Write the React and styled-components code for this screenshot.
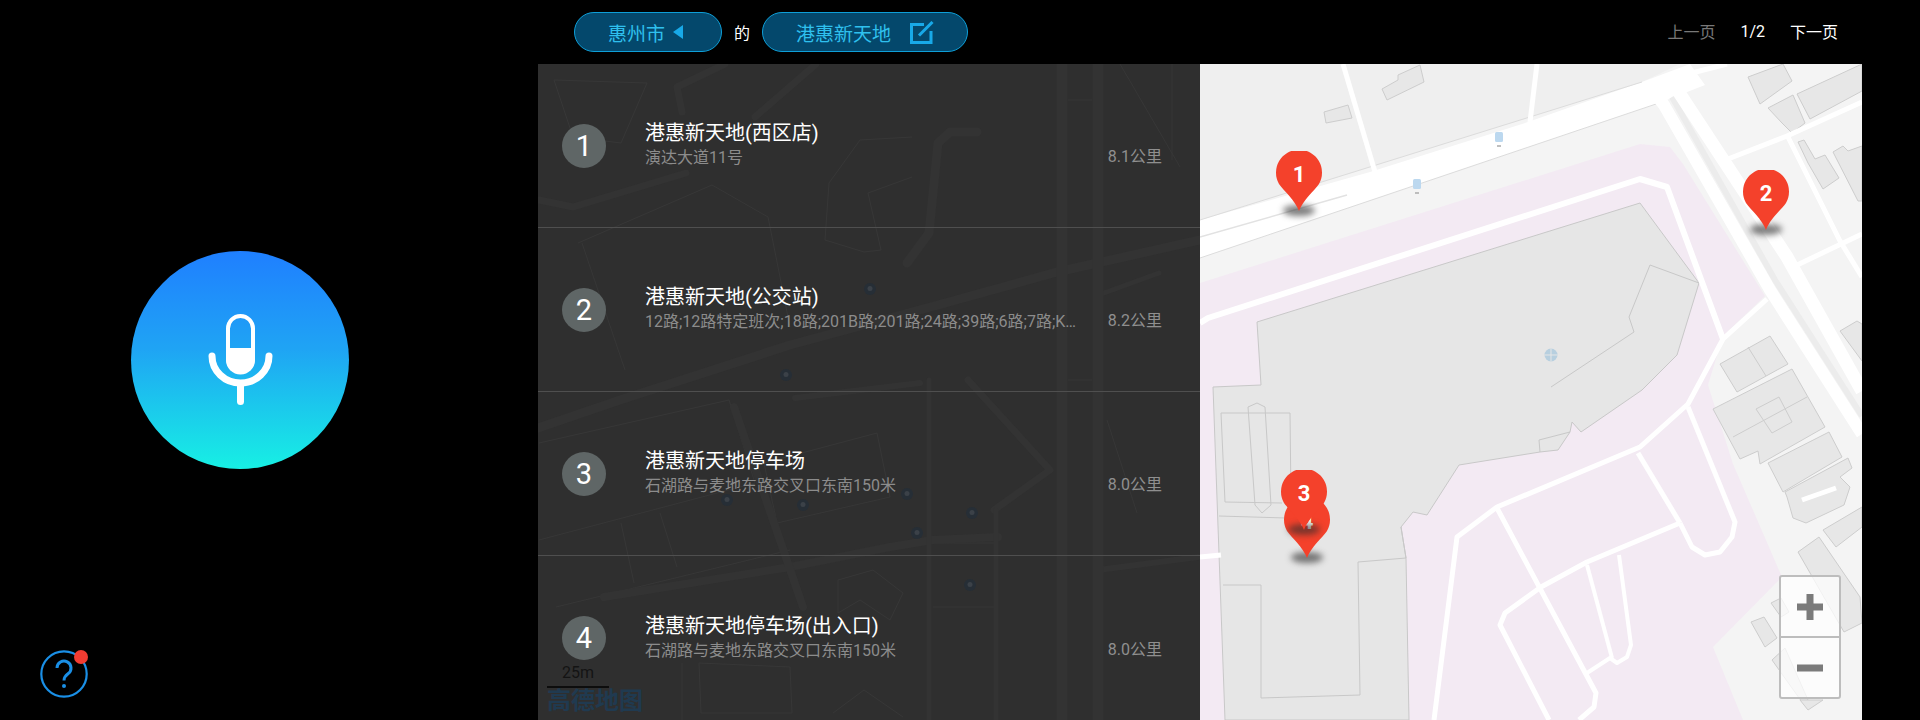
import React from "react";
import styled, { createGlobalStyle } from "styled-components";

const places = [
  { id: 1, name: "港惠新天地(西区店)", addr: "演达大道11号", dist: "8.1公里" },
  {
    id: 2,
    name: "港惠新天地(公交站)",
    addr: "12路;12路特定班次;18路;201B路;201路;24路;39路;6路;7路;K…",
    dist: "8.2公里",
  },
  { id: 3, name: "港惠新天地停车场", addr: "石湖路与麦地东路交叉口东南150米", dist: "8.0公里" },
  { id: 4, name: "港惠新天地停车场(出入口)", addr: "石湖路与麦地东路交叉口东南150米", dist: "8.0公里" },
];

// pins, x/y = tip of the pin on screen
const pins = [
  { id: 1, x: 1299, y: 211 },
  { id: 2, x: 1766, y: 230 },
  { id: 4, x: 1307, y: 558 },
  { id: 3, x: 1304, y: 530 },
];

const darkRoads = [
  { d: "M1200 240L1057 272 938 305 790 345 620 400 538 428", w: 9 },
  { d: "M604 597L790 567 890 547 933 540 998 537", w: 8 },
  { d: "M994 510L1050 470 968 380", w: 7 },
  { d: "M977 132H950L938 143 929 233 907 263", w: 9 },
  { d: "M734 407L803 607", w: 8 },
  { d: "M539 200L573 207 686 173", w: 7 },
  { d: "M682 112L677 87 725 64", w: 7 },
  { d: "M816 64L755 117", w: 7 },
  { d: "M1098 570L1198 557", w: 6 },
  { d: "M1104 293L1159 273", w: 5 },
  { d: "M795 398L920 383", w: 6 },
  { d: "M1062 64V720", w: 11 },
  { d: "M1098 64V720", w: 11 },
  { d: "M929 380V720", w: 5 },
  { d: "M996 510V720", w: 5 },
];

const darkLines = [
  "M554 80L647 83 621 143 573 137Z",
  "M912 137L860 140 829 183 825 240 864 252 881 250 868 193 912 177",
  "M578 243L712 185 768 217 790 327",
  "M582 243L625 370",
  "M1120 64L1180 167",
  "M1172 64V160",
  "M539 540L755 483 729 400 539 443",
  "M621 523L634 583",
  "M660 513L677 567",
  "M556 607L790 550",
  "M777 523L890 497 877 433 764 463Z",
  "M699 663L790 667 792 713 701 713Z",
  "M838 580L873 570 903 593 890 620 860 600 838 613Z",
  "M833 713L864 690 903 717",
  "M682 663V720",
  "M933 543H994",
  "M933 607H994",
  "M1107 420L1137 513",
  "M1068 100H1092",
  "M1068 380H1092",
];

const parkings = [
  [870, 289],
  [786, 375],
  [727, 500],
  [803, 505],
  [907, 494],
  [972, 513],
  [917, 533],
  [970, 585],
];

const pinkArea =
  "1200,283 1640,144 1670,147 1683,164 1765,296 1723,336 1708,385 1733,464 1782,577 1713,647 1743,720 1200,720";

const mainBuilding =
  "1257,322 1640,203 1699,283 1677,355 1642,390 1581,432 1572,422 1570,432 1558,450 1540,452 1459,465 1427,515 1413,512 1401,527 1406,558 1409,720 1225,720 1213,387 1261,385";

const blocks = [
  "1382,89 1398,80 1398,75 1420,65 1424,82 1387,100",
  "1324,112 1348,105 1352,118 1326,123",
  "1748,77 1783,64 1792,81 1760,104",
  "1768,108 1793,95 1805,123 1792,133 1782,123",
  "1797,94 1862,64 1862,91 1810,119",
  "1798,142 1804,140 1815,159 1825,155 1839,178 1823,189 1808,163",
  "1833,152 1843,146 1848,151 1862,146 1862,201 1858,201",
  "1840,331 1857,321 1862,324 1862,361",
  "1720,364 1770,336 1788,364 1737,392",
  "1713,409 1792,369 1825,427 1760,464 1758,451 1740,459",
  "1756,409 1779,397 1792,422 1772,433",
  "1768,463 1829,432 1842,457 1783,492",
  "1785,492 1848,458 1852,468 1840,477 1850,487 1844,505 1806,523 1793,518 1787,497",
  "1798,552 1819,537 1860,597 1862,623 1844,632",
  "1823,530 1862,507 1862,527 1836,547",
  "1751,622 1764,617 1777,638 1765,647",
  "1771,603 1781,598 1789,612 1781,617",
  "1772,660 1785,648 1808,700 1802,702",
  "1800,700 1823,700 1808,710",
];

const whiteRoads = [
  { d: "M1343 64L1375 172", w: 5 },
  { d: "M1537 64L1530 122", w: 5 },
  { d: "M1200 323L1208 318 1640 179 1667 187 1723 339", w: 6 },
  { d: "M1767 299L1723 339 1688 404 1640 447 1497 507 1457 537 1434 720", w: 5 },
  { d: "M1688 407L1735 522 1732 537 1720 552 1705 555 1692 547 1680 523", w: 5 },
  { d: "M1638 453L1680 523", w: 5 },
  { d: "M1680 523L1587 562 1541 587 1505 613 1500 625 1549 720", w: 5 },
  { d: "M1497 508L1596 693 1594 707 1579 720", w: 5 },
  { d: "M1587 565L1612 658", w: 4 },
  { d: "M1619 555L1631 645 1627 657 1617 663 1610 658 1587 673", w: 4 },
  { d: "M1200 557L1221 555", w: 5 },
  { d: "M1728 159L1787 136 1862 102", w: 5 },
  { d: "M1788 137L1840 241 1862 277", w: 5 },
  { d: "M1793 267L1862 234", w: 5 },
  { d: "M1680 76L1727 64", w: 5 },
  { d: "M1836 488L1802 500", w: 5 },
];

const GlobalStyle = createGlobalStyle`
  html, body {
    margin: 0;
    background: #000;
  }
  body {
    font-family: Roboto, "Noto Sans CJK SC", sans-serif;
  }
`;

const Page = styled.div`
  display: grid;
  grid-template-columns: 538px 1324px 58px;
  width: 1920px;
  height: 720px;
  overflow: hidden;
  background: #000;
`;

const VoicePanel = styled.div`
  display: flex;
  flex-direction: column;
  padding: 251px 0 0 40px;
`;

const MicButton = styled.div`
  display: flex;
  align-items: center;
  justify-content: center;
  width: 218px;
  height: 218px;
  margin-left: 91px;
  border-radius: 50%;
  background: linear-gradient(180deg, #1f7fff 0%, #1fa4f4 45%, #17f0e4 100%);
`;

const HelpButton = styled.div`
  position: relative;
  width: 48px;
  height: 48px;
  margin-top: 181px;
`;

const RedDot = styled.span`
  position: absolute;
  top: 0;
  right: 0;
  width: 14px;
  height: 14px;
  border-radius: 50%;
  background: #f23c32;
`;

const Main = styled.div`
  display: flex;
  flex-direction: column;
`;

const TopBar = styled.div`
  display: flex;
  align-items: center;
  height: 64px;
  padding: 0 24px 0 36px;
`;

const Pill = styled.div`
  display: flex;
  align-items: center;
  box-sizing: border-box;
  width: ${(p) => p.$width}px;
  height: 40px;
  padding-left: ${(p) => p.$pad}px;
  border: 1.5px solid #0e9fd8;
  border-radius: 20px;
  background: #04486c;
  color: #2fc0ee;
  font-size: 19px;
`;

const Triangle = styled.span`
  width: 0;
  height: 0;
  margin-left: 8px;
  border-top: 7px solid transparent;
  border-bottom: 7px solid transparent;
  border-right: 10px solid #18a9e8;
`;

const EditIcon = styled.svg`
  margin-left: 19px;
`;

const Of = styled.span`
  margin: 0 12px;
  color: #fff;
  font-size: 16px;
`;

const Pager = styled.div`
  display: flex;
  align-items: center;
  gap: 25px;
  margin: -2px 0 0 auto;
  color: #fff;
  font-size: 16px;
`;

const PagerLink = styled.span`
  color: ${(p) => (p.$disabled ? "#787878" : "#fff")};
`;

const Stage = styled.div`
  display: grid;
  grid-template-columns: 662px 662px;
  height: 656px;
  overflow: hidden;
`;

const ListPanel = styled.div`
  position: relative;
  overflow: hidden;
  background: #2f2f2f;
`;

const Backdrop = styled.svg`
  position: absolute;
  top: 0;
  left: 0;
`;

const Rows = styled.div`
  position: relative;
`;

const Row = styled.div`
  display: flex;
  align-items: center;
  box-sizing: border-box;
  height: 164px;
  padding: 0 38px 0 24px;
  border-bottom: 1px solid #4f4f4f;

  &:last-child {
    border-bottom: none;
  }
`;

const Badge = styled.div`
  display: flex;
  flex: none;
  align-items: center;
  justify-content: center;
  width: 44px;
  height: 44px;
  border-radius: 50%;
  background: #5f6666;
  color: #fff;
  font-size: 29px;
`;

const Info = styled.div`
  flex: 1;
  min-width: 0;
  margin: -1px 0 0 39px;
`;

const Name = styled.div`
  color: #fff;
  font-size: 20px;
  line-height: 26px;
`;

const Addr = styled.div`
  max-width: 440px;
  overflow: hidden;
  color: #8c8c8c;
  font-size: 16px;
  line-height: 24px;
  white-space: nowrap;
  text-overflow: ellipsis;
`;

const Dist = styled.div`
  flex: none;
  margin-top: 23px;
  color: #8f8f8f;
  font-size: 16px;
  line-height: 24px;
`;

const Brand = styled.div`
  position: absolute;
  bottom: 6px;
  left: 9px;
  display: flex;
  flex-direction: column;
`;

const Scale = styled.div`
  width: 62px;
  padding-bottom: 4px;
  border-bottom: 2px solid #0d0d0d;
  color: #141414;
  font-size: 16px;
  line-height: 18px;
  text-align: center;
`;

const Logo = styled.div`
  color: #203a50;
  font-size: 24px;
  font-weight: 700;
  line-height: 26px;
`;

const MapPanel = styled.div`
  position: relative;
  overflow: hidden;
  background: #f4f4f4;
`;

const MapDrawing = styled.svg`
  display: block;
`;

const Pin = styled.div`
  position: absolute;
  top: ${(p) => p.$y - 64 - 60}px;
  left: ${(p) => p.$x - 1200 - 23}px;
  width: 46px;
  height: 60px;
`;

const PinShadow = styled.span`
  position: absolute;
  top: 54px;
  left: 7px;
  width: 32px;
  height: 11px;
  border-radius: 50%;
  background: rgba(45, 45, 45, 0.62);
  filter: blur(3px);
`;

const PinBody = styled.svg`
  position: absolute;
  top: 0;
  left: 0;
`;

const PinNumber = styled.span`
  position: absolute;
  top: 11px;
  left: 0;
  width: 46px;
  color: #fff;
  font-size: 22px;
  font-weight: 700;
  line-height: 26px;
  text-align: center;
`;

const ZoomBox = styled.div`
  position: absolute;
  right: 21px;
  bottom: 21px;
  display: flex;
  flex-direction: column;
  box-sizing: border-box;
  width: 62px;
  height: 124px;
  border: 2px solid #bdbdbd;
  border-radius: 3px;
  background: rgba(255, 255, 255, 0.72);
`;

const ZoomKey = styled.div`
  position: relative;
  flex: 1;
  border-top: ${(p) => (p.$split ? "2px solid #bdbdbd" : "none")};

  &::before {
    content: "";
    position: absolute;
    top: 50%;
    left: 50%;
    width: 26px;
    height: 7px;
    background: #7b7b7b;
    transform: translate(-50%, -50%);
  }

  &::after {
    content: "";
    display: ${(p) => (p.$plus ? "block" : "none")};
    position: absolute;
    top: 50%;
    left: 50%;
    width: 7px;
    height: 26px;
    background: #7b7b7b;
    transform: translate(-50%, -50%);
  }
`;

const MicIcon = () => (
  <svg width="65" height="100" viewBox="0 0 65 100" fill="none" stroke="#fff" strokeLinecap="round">
    <rect x="20" y="6" width="25" height="55" rx="12.5" strokeWidth="4" />
    <path d="M18 38H47V50A14.5 14.5 0 0 1 18 50Z" fill="#fff" stroke="none" />
    <path d="M4 46a28.500 27 0 0 0 57 0" strokeWidth="7" />
    <path d="M32.5 74V91.5" strokeWidth="7" />
  </svg>
);

const HelpIcon = () => (
  <svg width="48" height="48" viewBox="0 0 48 48" fill="none" stroke="#1a8fe6" strokeWidth="3">
    <circle cx="24" cy="24" r="22.7" strokeWidth="2.2" />
    <path d="M17 18a7 7 0 1 1 11 5.800c-2.500 1.800-4 3.400-4 6.700" />
    <circle cx="24" cy="36" r="2" fill="#1a8fe6" stroke="none" />
  </svg>
);

const PencilBox = () => (
  <EditIcon width="24" height="23" viewBox="0 0 24 23" fill="none" stroke="#18a9e8" strokeWidth="3">
    <path d="M14 3.500H1.500V21.500H21V10" />
    <path d="M9 14.500L22.500 1" />
  </EditIcon>
);

const DarkMap = () => (
  <Backdrop width="662" height="656" viewBox="538 64 662 656" fill="none">
    {darkLines.map((d) => (
      <path key={d} d={d} stroke="#373737" strokeWidth="1" />
    ))}
    {darkRoads.map((r) => (
      <path key={r.d} d={r.d} stroke="#333333" strokeWidth={r.w} strokeLinejoin="round" strokeLinecap="round" />
    ))}
    {parkings.map(([x, y]) => (
      <g key={x + "-" + y}>
        <circle cx={x} cy={y} r="6" fill="#262e36" />
        <circle cx={x} cy={y - 0.5} r="2.5" fill="#3b4148" />
      </g>
    ))}
  </Backdrop>
);

const LightMap = () => (
  <MapDrawing width="662" height="656" viewBox="1200 64 662 656" fill="none">
    <polygon points="1200,64 1680,64 1642,82 1200,220" fill="#efefef" />
    <polygon points={pinkArea} fill="#f3eaf3" />
    {/* main road + median */}
    <polygon points="1200,220 1370,172 1528,122 1642,82 1690,64 1705,85 1659,103 1200,258" fill="#fff" />
    <path d="M1200 237L1347 195" stroke="#e2e2e2" strokeWidth="1.5" />
    <path d="M1200 220L1642 82M1200 258L1659 103" stroke="#dcdcdc" strokeWidth="1" />
    {/* diagonal road on the right */}
    <path d="M1672 97L1775 280 1862 416" stroke="#ececec" strokeWidth="6" />
    <path d="M1654 92L1664 105 1770 290 1862 434" stroke="#fff" strokeWidth="12" />
    <path d="M1672 82L1680 94 1787 257 1862 391" stroke="#fff" strokeWidth="13" />
    <polygon points={mainBuilding} fill="#e6e6e6" stroke="#c8c8c8" strokeWidth="1" />
    <path
      d="M1650 265L1699 283M1650 265L1629 317 1634 332 1551 387M1540 452L1539 440 1570 432M1221 413H1290L1291 500M1221 413L1225 502 1282 503M1248 407L1257 403 1265 407 1271 505 1262 513 1255 505ZM1219 516L1286 518M1401 527L1406 558 1358 562 1360 695 1261 698 1261 585 1223 585"
      stroke="#c8c8c8"
      strokeWidth="1"
    />
    {blocks.map((b) => (
      <polygon key={b} points={b} fill="#e7e7e7" stroke="#cdcdcd" strokeWidth="1" />
    ))}
    <path d="M1733 437L1807 397M1748 347L1766 376" stroke="#cdcdcd" strokeWidth="1" />
    {whiteRoads.map((r) => (
      <path key={r.d} d={r.d} stroke="#fff" strokeWidth={r.w} strokeLinejoin="round" />
    ))}
    {/* bus stops */}
    <g>
      <rect x="1495" y="132" width="8" height="10" rx="1.500" fill="#bcd8ef" />
      <rect x="1413" y="179" width="8" height="10" rx="1.500" fill="#bcd8ef" />
      <path d="M1497 146h4M1415 193h4" stroke="#aaa" strokeWidth="1.500" />
    </g>
    {/* globe */}
    <circle cx="1551" cy="355" r="6.500" fill="#b7cfdf" />
    <path d="M1544.500 355h13M1551 348.500v13" stroke="#e6e6e6" strokeWidth="1" />
  </MapDrawing>
);

const App = () => (
  <Page>
    <GlobalStyle />
    <VoicePanel>
      <MicButton>
        <MicIcon />
      </MicButton>
      <HelpButton>
        <HelpIcon />
        <RedDot />
      </HelpButton>
    </VoicePanel>
    <Main>
      <TopBar>
        <Pill $width={148} $pad={33}>
          惠州市
          <Triangle />
        </Pill>
        <Of>的</Of>
        <Pill $width={206} $pad={33}>
          港惠新天地
          <PencilBox />
        </Pill>
        <Pager>
          <PagerLink $disabled>上一页</PagerLink>
          <span>1/2</span>
          <PagerLink>下一页</PagerLink>
        </Pager>
      </TopBar>
      <Stage>
        <ListPanel>
          <DarkMap />
          <Rows>
            {places.map((p) => (
              <Row key={p.id}>
                <Badge>{p.id}</Badge>
                <Info>
                  <Name>{p.name}</Name>
                  <Addr>{p.addr}</Addr>
                </Info>
                <Dist>{p.dist}</Dist>
              </Row>
            ))}
          </Rows>
          <Brand>
            <Scale>25m</Scale>
            <Logo>高德地图</Logo>
          </Brand>
        </ListPanel>
        <MapPanel>
          <LightMap />
          {pins.map((p) => (
            <Pin key={p.id} $x={p.x} $y={p.y}>
              <PinShadow />
              <PinBody width="46" height="60" viewBox="0 0 46 60">
                <path d="M23 60C19 49 8 40 3 33A23 23 0 1 1 43 33C38 40 27 49 23 60Z" fill="#f4412b" />
              </PinBody>
              <PinNumber>{p.id}</PinNumber>
            </Pin>
          ))}
          <ZoomBox>
            <ZoomKey $plus />
            <ZoomKey $split />
          </ZoomBox>
        </MapPanel>
      </Stage>
    </Main>
  </Page>
);

export default App;
